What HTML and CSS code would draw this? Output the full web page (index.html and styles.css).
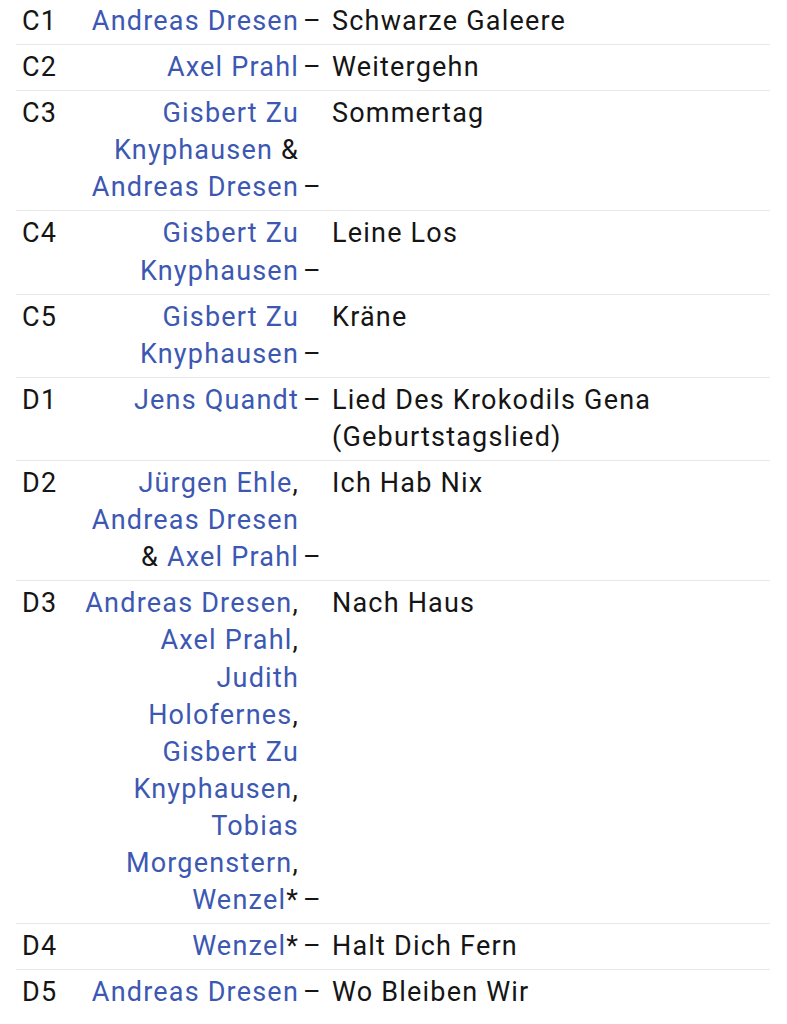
FILE: index.html
```html
<!DOCTYPE html>
<html lang="de">
<head>
<meta charset="utf-8">
<title>Tracklist</title>
<link rel="stylesheet" href="styles.css">
</head>
<body>
<div class="tracklist">
  <div class="track">
    <div class="pos">C1</div>
    <div class="artists"><a href="#">Andreas Dresen</a><span class="dash">–</span></div>
    <div class="title">Schwarze Galeere</div>
  </div>
  <div class="track">
    <div class="pos">C2</div>
    <div class="artists"><a href="#">Axel Prahl</a><span class="dash">–</span></div>
    <div class="title">Weitergehn</div>
  </div>
  <div class="track">
    <div class="pos">C3</div>
    <div class="artists"><a href="#">Gisbert Zu Knyphausen</a> &amp; <a href="#">Andreas Dresen</a><span class="dash">–</span></div>
    <div class="title">Sommertag</div>
  </div>
  <div class="track">
    <div class="pos">C4</div>
    <div class="artists"><a href="#">Gisbert Zu Knyphausen</a><span class="dash">–</span></div>
    <div class="title">Leine Los</div>
  </div>
  <div class="track">
    <div class="pos">C5</div>
    <div class="artists"><a href="#">Gisbert Zu Knyphausen</a><span class="dash">–</span></div>
    <div class="title">Kräne</div>
  </div>
  <div class="track">
    <div class="pos">D1</div>
    <div class="artists"><a href="#">Jens Quandt</a><span class="dash">–</span></div>
    <div class="title">Lied Des Krokodils Gena (Geburtstagslied)</div>
  </div>
  <div class="track">
    <div class="pos">D2</div>
    <div class="artists"><a href="#">Jürgen Ehle</a>, <a href="#">Andreas Dresen</a> &amp; <a href="#">Axel Prahl</a><span class="dash">–</span></div>
    <div class="title">Ich Hab Nix</div>
  </div>
  <div class="track">
    <div class="pos">D3</div>
    <div class="artists"><a href="#">Andreas Dresen</a>, <a href="#">Axel Prahl</a>, <a href="#">Judith Holofernes</a>, <a href="#">Gisbert Zu Knyphausen</a>, <a href="#">Tobias Morgenstern</a>, <a href="#">Wenzel</a>*<span class="dash">–</span></div>
    <div class="title">Nach Haus</div>
  </div>
  <div class="track">
    <div class="pos">D4</div>
    <div class="artists"><a href="#">Wenzel</a>*<span class="dash">–</span></div>
    <div class="title">Halt Dich Fern</div>
  </div>
  <div class="track">
    <div class="pos">D5</div>
    <div class="artists"><a href="#">Andreas Dresen</a><span class="dash">–</span></div>
    <div class="title">Wo Bleiben Wir</div>
  </div>
</div>
</body>
</html>
```
FILE: styles.css
```css
html, body {
  margin: 0;
  padding: 0;
  background: #ffffff;
}
body {
  font-family: Roboto, "Noto Sans", Arial, sans-serif;
  font-size: 27px;
  line-height: 37.1px;
  letter-spacing: 1.2px;
  color: #151515;
  overflow: hidden;
}
.tracklist {
  margin: -1px 17px 0 16px;
}
.track {
  display: grid;
  grid-template-columns: 65px 218px 1fr;
  padding: 4px 0;
  border-bottom: 1px solid #e8e8e8;
}
.track:last-child {
  border-bottom: none;
}
.pos {
  padding-left: 6px;
}
.artists {
  text-align: right;
}
.artists a {
  color: #3c58b2;
  text-decoration: none;
}
.dash {
  display: inline-block;
  width: 0;
  text-indent: 4px;
  text-align: left;
  white-space: nowrap;
}
.title {
  min-width: 0;
  padding-left: 33px;
}
```
